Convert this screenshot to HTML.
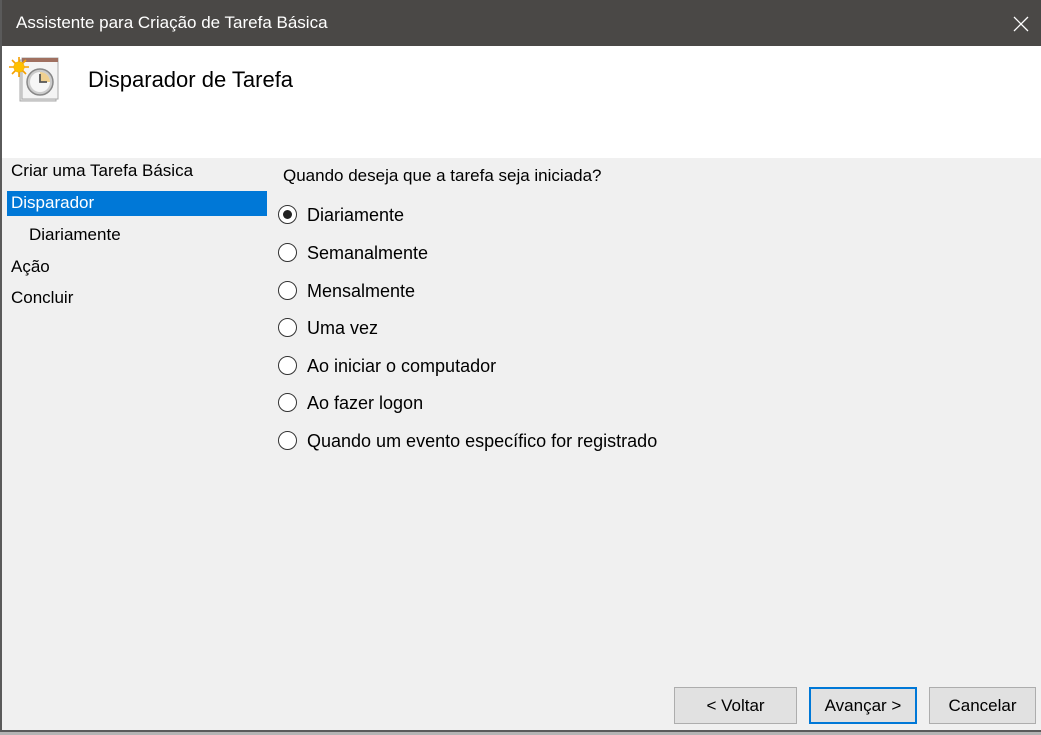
<!DOCTYPE html>
<html><head><meta charset="utf-8"><style>
*{margin:0;padding:0;box-sizing:border-box}
body{width:1041px;height:735px;overflow:hidden;background:#b4b4b4;font-family:"Liberation Sans",sans-serif;position:relative}
.win{position:absolute;left:0;top:0;width:1041px;height:732px;background:#f0f0f0;border-left:2px solid #5a5a5a;border-bottom:2px solid #5a5a5a}
.title{position:absolute;left:0;top:0;width:1041px;height:46px;background:#4a4846;color:#fff;font-size:17px;line-height:46px;padding-left:14px}
.header{position:absolute;left:0;top:46px;width:1039px;height:112px;background:#fff}
.h1{position:absolute;left:86px;top:21px;font-size:22px;color:#000}
.t{position:absolute;font-size:17px;color:#000;white-space:nowrap}
.r{font-size:18px}
.sel{position:absolute;left:5px;top:191px;width:260px;height:25px;background:#0078d7}
.radio{position:absolute;left:276px;width:19px;height:19px;border:1.5px solid #333;border-radius:50%;background:#fff}
.radio.on::after{content:"";position:absolute;left:3.5px;top:3.5px;width:9px;height:9px;border-radius:50%;background:#222}
.btn{position:absolute;top:687px;height:37px;background:#e1e1e1;border:1px solid #adadad;font-size:17px;text-align:center;line-height:35px;color:#000}
</style></head><body>
<div class="win">
<div class="title">Assistente para Criação de Tarefa Básica
<svg style="position:absolute;left:1011px;top:16px" width="16" height="16"><path d="M1 1L15 15M15 1L1 15" stroke="#fff" stroke-width="1.3"/></svg></div>
<div class="header">
<svg style="position:absolute;left:0;top:0" width="64" height="64">
<rect x="18" y="14" width="36" height="41" fill="#e4e4e4" stroke="#aaa"/>
<rect x="20" y="12" width="36" height="41" fill="#f4f4f4" stroke="#aaa"/>
<rect x="20" y="12" width="36" height="4" fill="#a07060"/>
<circle cx="38" cy="36" r="13" fill="#ccc" stroke="#888" stroke-width="1.5"/>
<circle cx="38" cy="36" r="10" fill="#f6f6f6"/>
<path d="M38 36V26A10 10 0 0 1 48 36Z" fill="#f0d090"/>
<path d="M38 28V36H45" stroke="#555" stroke-width="1.8" fill="none"/>
<circle cx="17" cy="21" r="5.5" fill="#f5b800"/>
<path d="M17 11V31M7 21H27M10 14L24 28M24 14L10 28" stroke="#f5a000" stroke-width="1.6"/>
<circle cx="17" cy="21" r="5" fill="#ffc000"/>
</svg>
<div class="h1">Disparador de Tarefa</div>
</div>
<div class="sel"></div>
<div class="t" style="left:9px;top:161px">Criar uma Tarefa Básica</div>
<div class="t" style="left:9px;top:193px;color:#fff">Disparador</div>
<div class="t" style="left:27px;top:225px">Diariamente</div>
<div class="t" style="left:9px;top:257px">Ação</div>
<div class="t" style="left:9px;top:288px">Concluir</div>
<div class="t" style="left:281px;top:166px">Quando deseja que a tarefa seja iniciada?</div>
<div class="radio on" style="top:205px"></div><div class="t r" style="left:305px;top:205px">Diariamente</div>
<div class="radio" style="top:243px"></div><div class="t r" style="left:305px;top:243px">Semanalmente</div>
<div class="radio" style="top:281px"></div><div class="t r" style="left:305px;top:281px">Mensalmente</div>
<div class="radio" style="top:318px"></div><div class="t r" style="left:305px;top:318px">Uma vez</div>
<div class="radio" style="top:356px"></div><div class="t r" style="left:305px;top:356px">Ao iniciar o computador</div>
<div class="radio" style="top:393px"></div><div class="t r" style="left:305px;top:393px">Ao fazer logon</div>
<div class="radio" style="top:431px"></div><div class="t r" style="left:305px;top:431px">Quando um evento específico for registrado</div>
<div class="btn" style="left:672px;width:123px">&lt; Voltar</div>
<div class="btn" style="left:807px;width:108px;border:2px solid #0078d7;line-height:33px">Avançar &gt;</div>
<div class="btn" style="left:927px;width:107px">Cancelar</div>
</div>
</body></html>
